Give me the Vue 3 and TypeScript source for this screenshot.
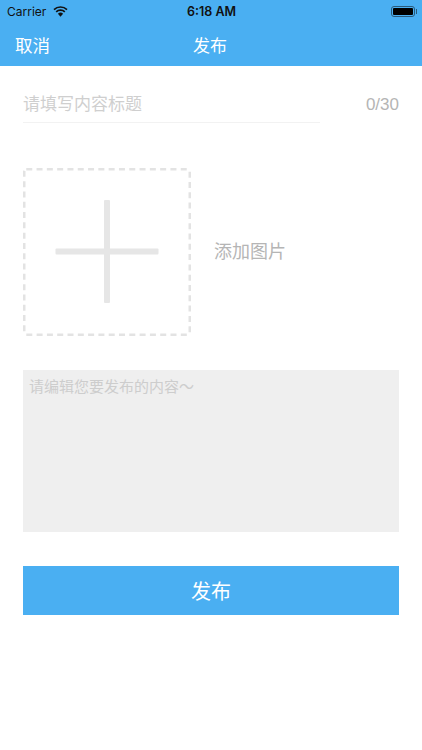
<script setup lang="ts">
const title = '发布'
</script>

<template>
  <div class="page">
    <header class="header">
      <div class="status">
        <div class="status-left">
          <span>Carrier</span>
          <svg class="wifi" width="15" height="11" viewBox="0 0 15 11">
            <path d="M7.5 10.8 L4.9 7.8 A3.8 3.8 0 0 1 10.1 7.8 Z" fill="#111" />
            <path d="M3.2 5.9 A6.2 6.2 0 0 1 11.8 5.9" fill="none" stroke="#111" stroke-width="1.7" />
            <path d="M1 3.6 A9.4 9.4 0 0 1 14 3.6" fill="none" stroke="#111" stroke-width="1.7" />
          </svg>
        </div>
        <span class="time">6:18 AM</span>
        <div class="battery"><div class="battery-fill"></div><i class="battery-tip"></i></div>
      </div>
      <div class="nav">
        <span class="nav-left">取消</span>
        <span class="nav-title">{{ title }}</span>
      </div>
    </header>

    <main class="content">
      <div class="title-row">
        <div class="title-input">请填写内容标题</div>
        <span class="count">0/30</span>
      </div>

      <div class="image-row">
        <div class="add-box">
          <svg class="dash" width="168" height="168" viewBox="0 0 168 168">
            <rect x="1.25" y="1.25" width="165.5" height="165.5" rx="2" fill="none" stroke="#e3e3e3" stroke-width="2.5" stroke-dasharray="6 4.3" />
          </svg>
          <svg width="104" height="104" viewBox="0 0 104 104">
            <rect x="49" y="0" width="6" height="103" rx="1" fill="#e6e6e6" />
            <rect x="0.5" y="48.5" width="103" height="6" rx="1" fill="#e6e6e6" />
          </svg>
        </div>
        <span class="add-text">添加图片</span>
      </div>

      <div class="textarea">请编辑您要发布的内容～</div>
      <button class="submit" type="button">发布</button>
    </main>
  </div>
</template>

<style scoped>
.page {
  width: 422px;
  height: 750px;
  background: #fff;
  overflow: hidden;
  font-family: "Liberation Sans", "Noto Sans CJK SC", sans-serif;
}
.header {
  height: 66px;
  background: #4aaff2;
  box-sizing: border-box;
}
.status {
  height: 22px;
  padding: 0 7px;
  display: grid;
  grid-template-columns: 1fr auto 1fr;
  align-items: center;
  font-size: 12px;
  font-family: Inter, "Liberation Sans", sans-serif;
  color: #111;
}
.status-left {
  display: flex;
  align-items: center;
  gap: 7px;
}
.time {
  font-weight: 600;
  font-size: 12.5px;
  margin-left: 1px;
}
.battery {
  position: relative;
  justify-self: end;
  width: 24px;
  height: 11px;
  box-sizing: border-box;
  border: 1px solid #2a5a7a;
  border-radius: 3px;
  padding: 1px;
}
.battery-fill {
  height: 100%;
  background: #000;
  border-radius: 1px;
}
.battery-tip {
  position: absolute;
  right: -3px;
  top: 2px;
  width: 1.5px;
  height: 5px;
  background: #2a5a7a;
}
.nav {
  height: 44px;
  position: relative;
  display: flex;
  align-items: center;
  justify-content: center;
  padding-right: 2px;
  color: #fff;
}
.nav-left {
  position: absolute;
  left: 15px;
  font-size: 17.5px;
}
.nav-title {
  font-size: 17px;
}
.content {
  padding: 0 23px;
}
.title-row {
  display: flex;
  justify-content: space-between;
  align-items: flex-start;
  height: 102px;
}
.title-input {
  width: 297px;
  height: 57px;
  box-sizing: border-box;
  padding: 27px 0 0;
  font-size: 17px;
  line-height: 24px;
  color: #cfcfcf;
  border-bottom: 1px solid #f2f2f2;
}
.count {
  margin-top: 27px;
  font-size: 17px;
  line-height: 24px;
  color: #b5b5b5;
}
.image-row {
  display: flex;
  align-items: center;
  gap: 23px;
}
.add-box {
  position: relative;
  width: 168px;
  height: 168px;
  display: flex;
  align-items: center;
  justify-content: center;
}
.dash {
  position: absolute;
  inset: 0;
}
.add-text {
  font-size: 18px;
  line-height: 22px;
  color: #b5b5b5;
}
.textarea {
  margin-top: 34px;
  height: 162px;
  box-sizing: border-box;
  background: #efefef;
  padding: 7px 6px;
  font-size: 15px;
  line-height: 20px;
  color: #cdcdcd;
}
.submit {
  display: block;
  width: 100%;
  height: 49px;
  margin-top: 34px;
  border: 0;
  padding: 0;
  background: #4aaff2;
  color: #fff;
  font-family: inherit;
  font-size: 20px;
}
</style>
